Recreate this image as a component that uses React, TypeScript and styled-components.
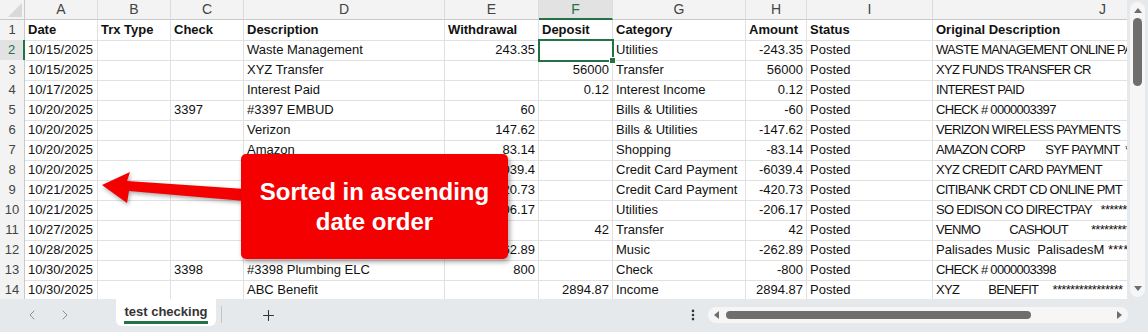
import React from 'react';
import styled, { createGlobalStyle, css } from 'styled-components';
import { ChevronLeft, ChevronRight, Plus, EllipsisVertical } from 'lucide-react';

const GREEN = '#217346';
const GRID = '#e1e1e1';

type Align = 'left' | 'right';

type Col = {
  letter: string;
  width: number;
  align: Align;
};

const COLS: Col[] = [
  { letter: 'A', width: 73, align: 'left' },
  { letter: 'B', width: 73, align: 'left' },
  { letter: 'C', width: 73, align: 'left' },
  { letter: 'D', width: 201, align: 'left' },
  { letter: 'E', width: 94, align: 'right' },
  { letter: 'F', width: 74, align: 'right' },
  { letter: 'G', width: 133, align: 'left' },
  { letter: 'H', width: 61, align: 'right' },
  { letter: 'I', width: 126, align: 'left' },
  { letter: 'J', width: 340, align: 'left' },
];

const TEMPLATE = `25px ${COLS.map((c) => `${c.width}px`).join(' ')}`;

const HEADERS = [
  'Date',
  'Trx Type',
  'Check',
  'Description',
  'Withdrawal',
  'Deposit',
  'Category',
  'Amount',
  'Status',
  'Original Description',
];

const ROWS: string[][] = [
  ['10/15/2025', '', '', 'Waste Management', '243.35', '', 'Utilities', '-243.35', 'Posted', 'WASTE MANAGEMENT ONLINE PAYMENT'],
  ['10/15/2025', '', '', 'XYZ Transfer', '', '56000', 'Transfer', '56000', 'Posted', 'XYZ FUNDS TRANSFER CR'],
  ['10/17/2025', '', '', 'Interest Paid', '', '0.12', 'Interest Income', '0.12', 'Posted', 'INTEREST PAID'],
  ['10/20/2025', '', '3397', '#3397 EMBUD', '60', '', 'Bills & Utilities', '-60', 'Posted', 'CHECK # 0000003397'],
  ['10/20/2025', '', '', 'Verizon', '147.62', '', 'Bills & Utilities', '-147.62', 'Posted', 'VERIZON WIRELESS PAYMENTS'],
  ['10/20/2025', '', '', 'Amazon', '83.14', '', 'Shopping', '-83.14', 'Posted', 'AMAZON CORP       SYF PAYMNT  ********'],
  ['10/20/2025', '', '', 'XYZ Credit Card', '6039.4', '', 'Credit Card Payment', '-6039.4', 'Posted', 'XYZ CREDIT CARD PAYMENT'],
  ['10/21/2025', '', '', 'Citibank', '420.73', '', 'Credit Card Payment', '-420.73', 'Posted', 'CITIBANK CRDT CD ONLINE PMT'],
  ['10/21/2025', '', '', 'SoCal Edison', '206.17', '', 'Utilities', '-206.17', 'Posted', 'SO EDISON CO DIRECTPAY   **********'],
  ['10/27/2025', '', '', 'Venmo', '', '42', 'Transfer', '42', 'Posted', 'VENMO          CASHOUT        **********'],
  ['10/28/2025', '', '', 'Palisades Music', '262.89', '', 'Music', '-262.89', 'Posted', 'Palisades Music  PalisadesM ********'],
  ['10/30/2025', '', '3398', '#3398 Plumbing ELC', '800', '', 'Check', '-800', 'Posted', 'CHECK # 0000003398'],
  ['10/30/2025', '', '', 'ABC Benefit', '', '2894.87', 'Income', '2894.87', 'Posted', 'XYZ          BENEFIT     ****************'],
];

const SELECTED_ROW = 2;
const SELECTED_COL = 'F';
const BANK_COL = 9;

// all-caps bank text reads narrower in the sheet font
const isCaps = (v: string) => v === v.toUpperCase() && /[A-Z]/.test(v);

const GlobalStyle = createGlobalStyle`
  html, body {
    margin: 0;
    padding: 0;
    background: #e6e9ec;
  }
  body {
    font-family: "Liberation Sans", Arial, sans-serif;
    overflow: hidden;
  }
`;

const Window = styled.div`
  width: 1148px;
  height: 332px;
  display: flex;
  flex-direction: column;
  background: #e6e9ec;
`;

const Body = styled.div`
  display: flex;
  height: 299px;
`;

const SheetArea = styled.div`
  position: relative;
  flex: 1;
  overflow: hidden;
  background: #fff;
`;

const GridRow = styled.div`
  display: grid;
  grid-template-columns: ${TEMPLATE};
  height: 20px;
`;

const Corner = styled.div`
  position: relative;
  background: #f3f3f3;
  border-right: 1px solid #c8c8c8;
  border-bottom: 1px solid #c8c8c8;

  &::after {
    content: '';
    position: absolute;
    right: 2px;
    bottom: 2px;
    border-left: 14px solid transparent;
    border-bottom: 14px solid #d8d8d8;
  }
`;

const ColHead = styled.div<{ $active?: boolean }>`
  box-sizing: border-box;
  background: #f3f3f3;
  border-right: 1px solid #dcdcdc;
  border-bottom: 1px solid #c8c8c8;
  color: #444;
  font-size: 14px;
  line-height: 19px;
  text-align: center;
  overflow: hidden;

  ${({ $active }) =>
    $active &&
    css`
      background: #e2e2e2;
      color: ${GREEN};
      border-bottom: 2px solid ${GREEN};
    `}
`;

const RowHead = styled.div<{ $active?: boolean }>`
  box-sizing: border-box;
  background: #f3f3f3;
  border-right: 1px solid #c8c8c8;
  border-bottom: 1px solid ${GRID};
  color: #444;
  font-size: 13px;
  line-height: 20px;
  text-align: center;

  ${({ $active }) =>
    $active &&
    css`
      background: #e2e2e2;
      color: ${GREEN};
      border-right: 2px solid ${GREEN};
    `}
`;

const Cell = styled.div<{ $align: Align; $bold?: boolean; $selected?: boolean; $caps?: boolean }>`
  position: relative;
  box-sizing: border-box;
  border-right: 1px solid ${GRID};
  border-bottom: 1px solid ${GRID};
  padding: 0 3px;
  font-size: 13px;
  line-height: 20px;
  color: #111;
  white-space: pre;
  overflow: hidden;
  text-align: ${({ $align }) => $align};
  font-weight: ${({ $bold }) => ($bold ? 700 : 400)};
  letter-spacing: ${({ $caps }) => ($caps ? '-0.7px' : '0')};

  ${({ $selected }) =>
    $selected &&
    css`
      overflow: visible;
      outline: 2px solid ${GREEN};
      outline-offset: -1px;
      z-index: 1;

      &::after {
        content: '';
        position: absolute;
        right: -4px;
        bottom: -4px;
        width: 5px;
        height: 5px;
        background: ${GREEN};
        border: 1px solid #fff;
      }
    `}
`;

const Callout = styled.div`
  position: absolute;
  left: 241px;
  top: 154px;
  width: 267px;
  height: 105px;
  z-index: 3;
  display: flex;
  align-items: center;
  justify-content: center;
  text-align: center;
  background: #f40000;
  border-radius: 5px;
  box-shadow: 2px 3px 5px rgba(0, 0, 0, 0.35);
  color: #fff;
  font-weight: 700;
  font-size: 24px;
  line-height: 30px;
`;

const ArrowSvg = styled.svg`
  position: absolute;
  left: 95px;
  top: 165px;
  z-index: 2;
  filter: drop-shadow(1px 2px 2px rgba(0, 0, 0, 0.35));
`;

const VScroll = styled.div`
  width: 21px;
  padding: 2px 3px 2px 3px;
  box-sizing: border-box;
  background: #e6e9ec;
`;

const VTrack = styled.div`
  height: 100%;
  width: 15px;
  border-radius: 8px;
  background: #f6f6f6;
  display: flex;
  flex-direction: column;
  align-items: center;
  padding: 5px 0;
  box-sizing: border-box;
`;

const VThumb = styled.div`
  width: 9px;
  height: 68px;
  margin-top: 4px;
  border-radius: 5px;
  background: #6e6e6e;
`;

const Spacer = styled.div`
  flex: 1;
`;

const BottomBar = styled.div`
  height: 33px;
  display: flex;
  align-items: flex-start;
  background: #e6e9ec;
`;

const NavGroup = styled.div`
  box-sizing: border-box;
  width: 116px;
  display: flex;
  align-items: center;
  gap: 17px;
  padding: 8px 0 0 24px;
  color: #8c8c8c;
`;

const SheetTab = styled.div`
  width: 100px;
  height: 27px;
  box-sizing: border-box;
  display: flex;
  justify-content: center;
  padding-top: 5px;
  background: #fff;
  border-radius: 0 0 6px 6px;
`;

const TabLabel = styled.span`
  box-sizing: border-box;
  height: 20px;
  font-size: 13px;
  font-weight: 700;
  line-height: 16px;
  color: #333;
  border-bottom: 3px solid ${GREEN};
`;

const TabDivider = styled.div`
  width: 1px;
  height: 17px;
  margin: 7px 0 0 5px;
  background: #c4c4c4;
`;

const AddButton = styled.div`
  margin: 8px 0 0 38px;
  color: #333;
  display: flex;
`;

const DotsButton = styled.div`
  margin: 9px 8px 0 auto;
  color: #333;
  display: flex;
`;

const HTrack = styled.div`
  width: 420px;
  height: 16px;
  margin: 8px 20px 0 0;
  box-sizing: border-box;
  border-radius: 8px;
  background: #f6f6f6;
  display: flex;
  align-items: center;
  padding: 0 5px;
`;

const HThumb = styled.div`
  width: 305px;
  height: 8px;
  margin-left: 6px;
  border-radius: 4px;
  background: #6e6e6e;
`;

const Triangle = ({ dir }: { dir: 'up' | 'down' | 'left' | 'right' }) => {
  const points = {
    up: '0,6 4,1 8,6',
    down: '0,1 8,1 4,6',
    left: '6,0 6,8 1,4',
    right: '1,0 1,8 6,4',
  }[dir];
  const horizontal = dir === 'left' || dir === 'right';
  return (
    <svg width={horizontal ? 7 : 8} height={horizontal ? 8 : 7} viewBox={horizontal ? '0 0 7 8' : '0 0 8 7'}>
      <polygon points={points} fill="#6e6e6e" />
    </svg>
  );
};

const App = () => {
  return (
    <Window>
      <GlobalStyle />
      <Body>
        <SheetArea>
          <GridRow>
            <Corner />
            {COLS.map((c) => (
              <ColHead key={c.letter} $active={c.letter === SELECTED_COL}>
                {c.letter}
              </ColHead>
            ))}
          </GridRow>
          <GridRow>
            <RowHead>1</RowHead>
            {HEADERS.map((h) => (
              <Cell key={h} $align="left" $bold>
                {h}
              </Cell>
            ))}
          </GridRow>
          {ROWS.map((row, i) => {
            const rowNum = i + 2;
            return (
              <GridRow key={rowNum}>
                <RowHead $active={rowNum === SELECTED_ROW}>{rowNum}</RowHead>
                {row.map((value, j) => (
                  <Cell
                    key={j}
                    $align={COLS[j].align}
                    $caps={j === BANK_COL && isCaps(value)}
                    $selected={rowNum === SELECTED_ROW && COLS[j].letter === SELECTED_COL}
                  >
                    {value}
                  </Cell>
                ))}
              </GridRow>
            );
          })}

          <ArrowSvg width="155" height="45" viewBox="0 0 155 45">
            <polygon points="7,20 35,7 32,16 150,24 150,36 34,26 32,38" fill="#f40000" />
          </ArrowSvg>
          <Callout>
            Sorted in ascending
            <br />
            date order
          </Callout>
        </SheetArea>

        <VScroll>
          <VTrack>
            <Triangle dir="up" />
            <VThumb />
            <Spacer />
            <Triangle dir="down" />
          </VTrack>
        </VScroll>
      </Body>

      <BottomBar>
        <NavGroup>
          <ChevronLeft size={16} strokeWidth={1.5} />
          <ChevronRight size={16} strokeWidth={1.5} />
        </NavGroup>
        <SheetTab>
          <TabLabel>test checking</TabLabel>
        </SheetTab>
        <TabDivider />
        <AddButton>
          <Plus size={17} strokeWidth={1.5} />
        </AddButton>
        <DotsButton>
          <EllipsisVertical size={14} strokeWidth={2.5} />
        </DotsButton>
        <HTrack>
          <Triangle dir="left" />
          <HThumb />
          <Spacer />
          <Triangle dir="right" />
        </HTrack>
      </BottomBar>
    </Window>
  );
};

export default App;
